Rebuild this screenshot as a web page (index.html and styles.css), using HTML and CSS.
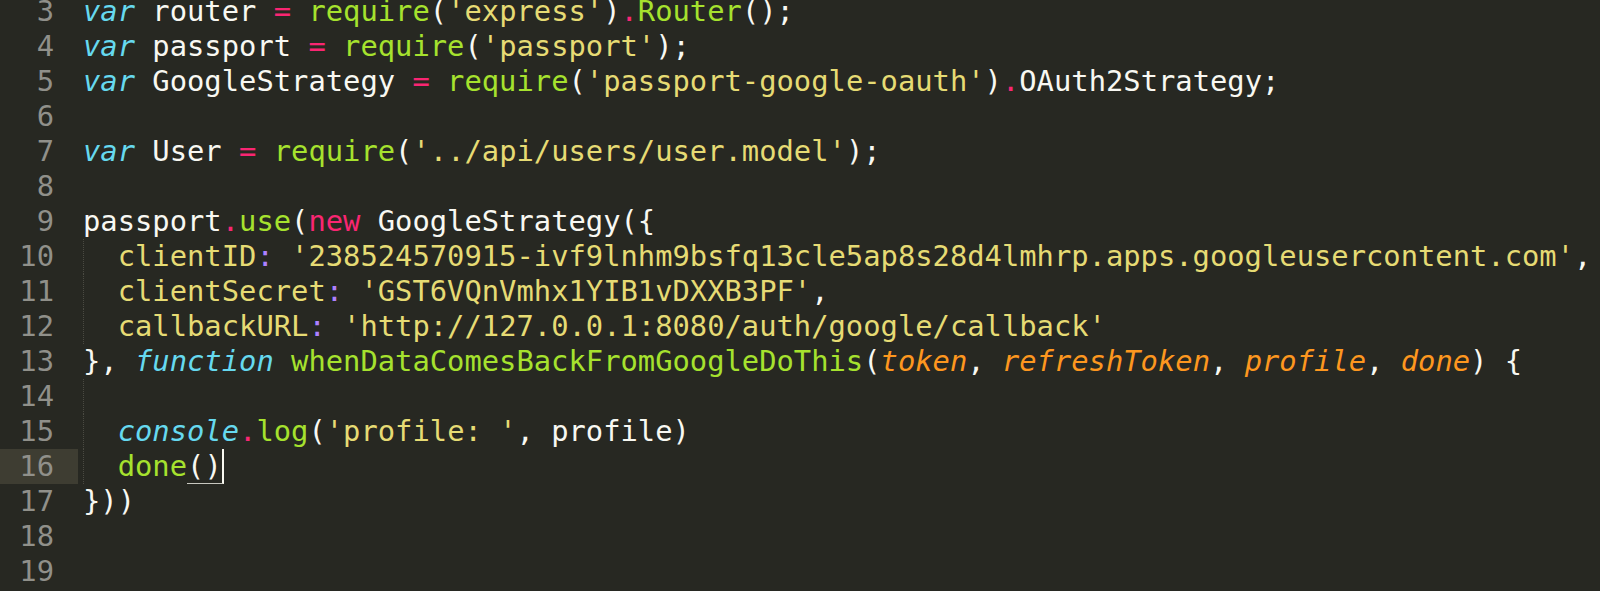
FILE: index.html
```html
<!DOCTYPE html>
<html lang="en">
<head>
<meta charset="utf-8">
<title>editor</title>
<link rel="stylesheet" href="styles.css">
</head>
<body>
<div class="editor">
  <div class="row"><div class="ln">3</div><div class="code"><span class="st">var</span> router <span class="kw">=</span> <span class="fn">require</span>(<span class="str">'express'</span>)<span class="kw">.</span><span class="fn">Router</span>();</div></div>
  <div class="row"><div class="ln">4</div><div class="code"><span class="st">var</span> passport <span class="kw">=</span> <span class="fn">require</span>(<span class="str">'passport'</span>);</div></div>
  <div class="row"><div class="ln">5</div><div class="code"><span class="st">var</span> GoogleStrategy <span class="kw">=</span> <span class="fn">require</span>(<span class="str">'passport-google-oauth'</span>)<span class="kw">.</span>OAuth2Strategy;</div></div>
  <div class="row"><div class="ln">6</div><div class="code"></div></div>
  <div class="row"><div class="ln">7</div><div class="code"><span class="st">var</span> User <span class="kw">=</span> <span class="fn">require</span>(<span class="str">'../api/users/user.model'</span>);</div></div>
  <div class="row"><div class="ln">8</div><div class="code"></div></div>
  <div class="row"><div class="ln">9</div><div class="code">passport<span class="kw">.</span><span class="fn">use</span>(<span class="kw">new</span> GoogleStrategy({</div></div>
  <div class="row"><div class="ln">10</div><div class="code guide">  <span class="str">clientID</span><span class="pu">:</span> <span class="str">'238524570915-ivf9lnhm9bsfq13cle5ap8s28d4lmhrp.apps.googleusercontent.com'</span>,</div></div>
  <div class="row"><div class="ln">11</div><div class="code guide">  <span class="str">clientSecret</span><span class="pu">:</span> <span class="str">'GST6VQnVmhx1YIB1vDXXB3PF'</span>,</div></div>
  <div class="row"><div class="ln">12</div><div class="code guide">  <span class="str">callbackURL</span><span class="pu">:</span> <span class="str">'http://127.0.0.1:8080/auth/google/callback'</span></div></div>
  <div class="row"><div class="ln">13</div><div class="code">}, <span class="st">function</span> <span class="fn">whenDataComesBackFromGoogleDoThis</span>(<span class="pa">token</span>, <span class="pa">refreshToken</span>, <span class="pa">profile</span>, <span class="pa">done</span>) {</div></div>
  <div class="row"><div class="ln">14</div><div class="code guide"></div></div>
  <div class="row"><div class="ln">15</div><div class="code guide">  <span class="st">console</span><span class="kw">.</span><span class="fn">log</span>(<span class="str">'profile: '</span>, profile)</div></div>
  <div class="row current"><div class="ln">16</div><div class="code guide">  <span class="fn">done</span><span class="match">()</span></div></div>
  <div class="row"><div class="ln">17</div><div class="code">}))</div></div>
  <div class="row"><div class="ln">18</div><div class="code"></div></div>
  <div class="row"><div class="ln">19</div><div class="code"></div></div>
</div>
</body>
</html>
```

FILE: styles.css
```css
html, body {
  margin: 0;
  padding: 0;
  background: #272822;
  overflow: hidden;
}

.editor {
  margin-top: -6px;
  font-family: "DejaVu Sans Mono", "Liberation Mono", monospace;
  font-size: 28.8px;
  line-height: 35px;
  color: #f8f8f2;
}

.row {
  display: flex;
  height: 35px;
}

.ln {
  width: 78px;
  flex: none;
  box-sizing: border-box;
  padding-right: 24px;
  text-align: right;
  color: #90908a;
}

.current .ln {
  background: #3e3d32;
}

.code {
  flex: 1;
  margin-left: 5px;
  white-space: pre;
}

.guide {
  background-image: repeating-linear-gradient(to bottom, #4a4a42 0 1px, transparent 1px 2px);
  background-size: 1px 100%;
  background-repeat: no-repeat;
  background-position: 0 0;
}

.st { color: #66d9ef; font-style: italic; }
.kw { color: #f92672; }
.fn { color: #a6e22e; }
.str { color: #e6db74; }
.pa { color: #fd971f; font-style: italic; }
.pu { color: #ae81ff; }

.match {
  border-bottom: 1px solid #c8c8c0;
  border-right: 2px solid #f8f8f0;
}
```
